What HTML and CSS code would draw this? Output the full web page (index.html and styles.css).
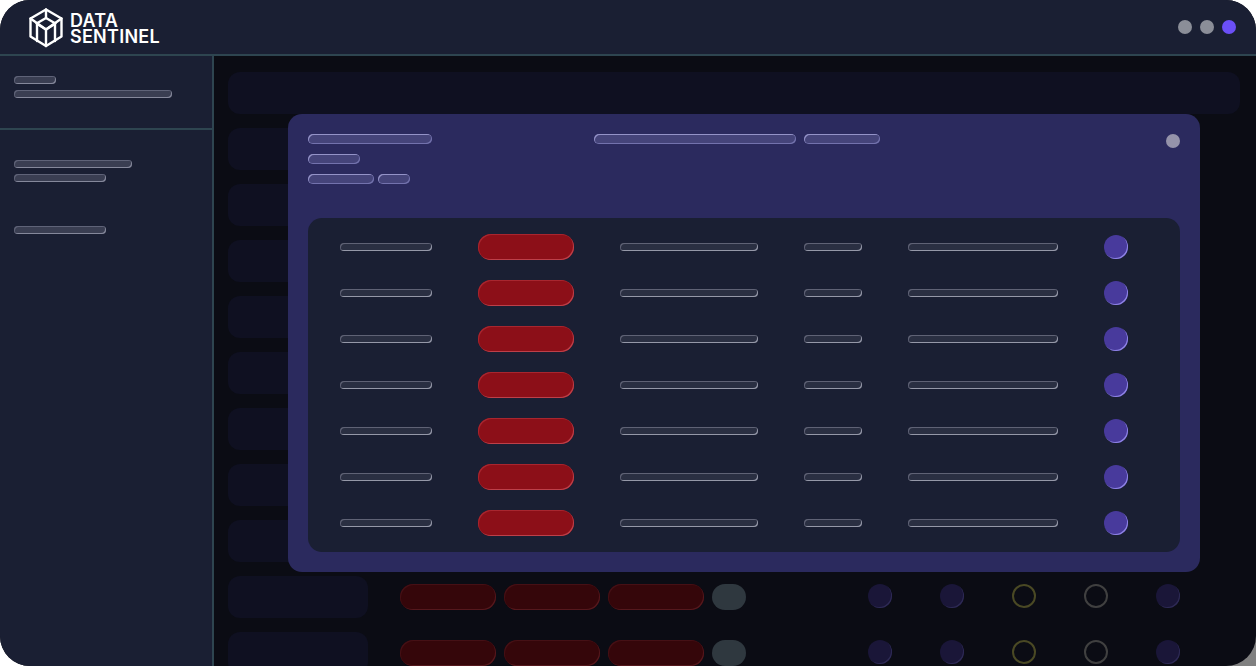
FILE: index.html
```html
<!DOCTYPE html>
<html lang="en">
<head>
    <meta charset="UTF-8">
    <meta name="viewport" content="width=device-width, initial-scale=1.0">
    <title>Data Sentinel</title>
    <link rel="stylesheet" href="styles.css">
</head>
<body>
    <div class="corner"></div>
    <div class="frame">
        <header class="topbar">
            <div class="logo">
                <svg class="logo-mark" width="34" height="40" viewBox="0 0 34 40" fill="none" stroke="#fff" stroke-width="2.4" stroke-linejoin="round" stroke-linecap="round">
                    <path d="M17 1.5 32.5 10.5V28.5L17 38 1.5 28.5V10.5Z"/>
                    <path d="M17 10 26.5 15.5 17 21.5 7.5 15.5Z"/>
                    <path d="M1.5 10.5 17 21.5 32.5 10.5"/>
                    <path d="M17 1.5V10"/>
                    <path d="M17 21.5V38M8 17V33M26 17V33"/>
                </svg>
                <div class="logo-text">
                    <div>DATA</div>
                    <div>SENTINEL</div>
                </div>
            </div>
            <div class="dots">
                <span class="dot"></span>
                <span class="dot"></span>
                <span class="dot dot-active"></span>
            </div>
        </header>
        <div class="content">
            <aside class="sidebar">
                <div class="side-top">
                    <span class="bar side-bar w42"></span>
                    <span class="bar side-bar w158"></span>
                </div>
                <div class="side-list">
                    <span class="bar side-bar w118"></span>
                    <span class="bar side-bar w92"></span>
                    <span class="bar side-bar w92 side-gap"></span>
                </div>
            </aside>
            <main class="main">
                <div class="searchbar"></div>
                <div class="bg-row"><div class="bg-label"></div><div class="bg-pill"></div><div class="bg-pill"></div><div class="bg-pill"></div><div class="bg-tag"></div><div class="bg-dots"><span class="bg-dot"></span><span class="bg-dot"></span><span class="bg-ring olive"></span><span class="bg-ring"></span><span class="bg-dot"></span></div></div>
                <div class="bg-row"><div class="bg-label"></div><div class="bg-pill"></div><div class="bg-pill"></div><div class="bg-pill"></div><div class="bg-tag"></div><div class="bg-dots"><span class="bg-dot"></span><span class="bg-dot"></span><span class="bg-ring olive"></span><span class="bg-ring"></span><span class="bg-dot"></span></div></div>
                <div class="bg-row"><div class="bg-label"></div><div class="bg-pill"></div><div class="bg-pill"></div><div class="bg-pill"></div><div class="bg-tag"></div><div class="bg-dots"><span class="bg-dot"></span><span class="bg-dot"></span><span class="bg-ring olive"></span><span class="bg-ring"></span><span class="bg-dot"></span></div></div>
                <div class="bg-row"><div class="bg-label"></div><div class="bg-pill"></div><div class="bg-pill"></div><div class="bg-pill"></div><div class="bg-tag"></div><div class="bg-dots"><span class="bg-dot"></span><span class="bg-dot"></span><span class="bg-ring olive"></span><span class="bg-ring"></span><span class="bg-dot"></span></div></div>
                <div class="bg-row"><div class="bg-label"></div><div class="bg-pill"></div><div class="bg-pill"></div><div class="bg-pill"></div><div class="bg-tag"></div><div class="bg-dots"><span class="bg-dot"></span><span class="bg-dot"></span><span class="bg-ring olive"></span><span class="bg-ring"></span><span class="bg-dot"></span></div></div>
                <div class="bg-row"><div class="bg-label"></div><div class="bg-pill"></div><div class="bg-pill"></div><div class="bg-pill"></div><div class="bg-tag"></div><div class="bg-dots"><span class="bg-dot"></span><span class="bg-dot"></span><span class="bg-ring olive"></span><span class="bg-ring"></span><span class="bg-dot"></span></div></div>
                <div class="bg-row"><div class="bg-label"></div><div class="bg-pill"></div><div class="bg-pill"></div><div class="bg-pill"></div><div class="bg-tag"></div><div class="bg-dots"><span class="bg-dot"></span><span class="bg-dot"></span><span class="bg-ring olive"></span><span class="bg-ring"></span><span class="bg-dot"></span></div></div>
                <div class="bg-row"><div class="bg-label"></div><div class="bg-pill"></div><div class="bg-pill"></div><div class="bg-pill"></div><div class="bg-tag"></div><div class="bg-dots"><span class="bg-dot"></span><span class="bg-dot"></span><span class="bg-ring olive"></span><span class="bg-ring"></span><span class="bg-dot"></span></div></div>
                <div class="bg-row"><div class="bg-label"></div><div class="bg-pill"></div><div class="bg-pill"></div><div class="bg-pill"></div><div class="bg-tag"></div><div class="bg-dots"><span class="bg-dot"></span><span class="bg-dot"></span><span class="bg-ring olive"></span><span class="bg-ring"></span><span class="bg-dot"></span></div></div>
                <div class="bg-row"><div class="bg-label"></div><div class="bg-pill"></div><div class="bg-pill"></div><div class="bg-pill"></div><div class="bg-tag"></div><div class="bg-dots"><span class="bg-dot"></span><span class="bg-dot"></span><span class="bg-ring olive"></span><span class="bg-ring"></span><span class="bg-dot"></span></div></div>
            </main>
        </div>

        <div class="modal">
            <div class="modal-head">
                <div class="head-col">
                    <span class="bar head-bar w124"></span>
                    <span class="bar head-bar w52"></span>
                    <div class="head-pair">
                        <span class="bar head-bar w66"></span>
                        <span class="bar head-bar w32"></span>
                    </div>
                </div>
                <div class="head-pair head-mid">
                    <span class="bar head-bar w202"></span>
                    <span class="bar head-bar w76"></span>
                </div>
                <span class="modal-close"></span>
            </div>
            <div class="modal-table">
                <span class="bar cell w92"></span><span class="status"></span><span class="bar cell w138"></span><span class="bar cell w58"></span><span class="bar cell w150"></span><span class="action"></span>
                <span class="bar cell w92"></span><span class="status"></span><span class="bar cell w138"></span><span class="bar cell w58"></span><span class="bar cell w150"></span><span class="action"></span>
                <span class="bar cell w92"></span><span class="status"></span><span class="bar cell w138"></span><span class="bar cell w58"></span><span class="bar cell w150"></span><span class="action"></span>
                <span class="bar cell w92"></span><span class="status"></span><span class="bar cell w138"></span><span class="bar cell w58"></span><span class="bar cell w150"></span><span class="action"></span>
                <span class="bar cell w92"></span><span class="status"></span><span class="bar cell w138"></span><span class="bar cell w58"></span><span class="bar cell w150"></span><span class="action"></span>
                <span class="bar cell w92"></span><span class="status"></span><span class="bar cell w138"></span><span class="bar cell w58"></span><span class="bar cell w150"></span><span class="action"></span>
                <span class="bar cell w92"></span><span class="status"></span><span class="bar cell w138"></span><span class="bar cell w58"></span><span class="bar cell w150"></span><span class="action"></span>
            </div>
        </div>
    </div>
</body>
</html>
```

FILE: styles.css
```css
html, body {
    margin: 0;
    padding: 0;
    background: #fff;
}
body {
    position: relative;
    width: 1256px;
    height: 666px;
    overflow: hidden;
}
.corner {
    position: absolute;
    right: 0;
    bottom: 0;
    width: 30px;
    height: 30px;
    background: #808080;
}
.frame {
    position: relative;
    width: 1256px;
    height: 666px;
    border-radius: 30px;
    overflow: hidden;
    background: #0b0c14;
    display: flex;
    flex-direction: column;
}

/* top bar */
.topbar {
    height: 54px;
    flex: none;
    display: flex;
    align-items: center;
    justify-content: space-between;
    padding: 0 20px 0 29px;
    background: #1a1f33;
    border-bottom: 2px solid #2e4550;
}
.logo {
    display: flex;
    align-items: center;
    gap: 7px;
}
.logo-mark {
    display: block;
    margin-top: 1px;
}
.logo-text {
    font-family: Inter, "Liberation Sans", sans-serif;
    font-weight: 600;
    font-size: 18px;
    line-height: 16px;
    letter-spacing: 0.25px;
    color: #fff;
    margin-top: 4px;
}
.dots {
    display: flex;
    gap: 8px;
}
.dot {
    width: 14px;
    height: 14px;
    border-radius: 50%;
    background: #8b8e98;
}
.dot-active {
    background: #6b4ff6;
}

/* placeholder bars */
.bar {
    display: block;
    border-radius: 4px;
    flex: none;
}
.side-bar {
    height: 8px;
    background: #3a3e52;
    box-shadow: inset 1px 1px 0 #5f6378, inset -1px -1px 0 #85889b;
}
.head-bar {
    height: 10px;
    border-radius: 5px;
    background: #45447a;
    box-shadow: inset 1px 1px 0 #9493c8, inset -1px -1px 0 #7372ad;
}
.cell {
    height: 8px;
    background: #2a2f42;
    box-shadow: inset 1px 1px 0 #5f6275, inset -1px -1px 0 #9598a8;
}
.w32 { width: 32px; }
.w42 { width: 42px; }
.w52 { width: 52px; }
.w58 { width: 58px; }
.w66 { width: 66px; }
.w76 { width: 76px; }
.w92 { width: 92px; }
.w118 { width: 118px; }
.w124 { width: 124px; }
.w138 { width: 138px; }
.w150 { width: 150px; }
.w158 { width: 158px; }
.w202 { width: 202px; }

/* sidebar */
.content {
    flex: 1;
    display: flex;
    min-height: 0;
}
.sidebar {
    width: 212px;
    flex: none;
    background: #1a1f33;
    border-right: 2px solid #2e4550;
}
.side-top {
    height: 74px;
    box-sizing: border-box;
    padding: 20px 14px 0;
    display: flex;
    flex-direction: column;
    gap: 6px;
    border-bottom: 2px solid #2e4550;
}
.side-list {
    padding: 30px 14px 0;
    display: flex;
    flex-direction: column;
    gap: 6px;
}
.side-gap {
    margin-top: 38px;
}

/* dimmed page behind the modal */
.main {
    flex: 1;
    min-width: 0;
    padding: 16px 16px 0 14px;
    display: flex;
    flex-direction: column;
    gap: 14px;
}
.searchbar {
    height: 42px;
    flex: none;
    border-radius: 12px;
    background: #0f1021;
}
.bg-row {
    height: 42px;
    flex: none;
    display: flex;
    align-items: flex-start;
}
.bg-label {
    width: 140px;
    height: 42px;
    flex: none;
    border-radius: 12px;
    background: #0f1021;
    margin-right: 32px;
}
.bg-pill {
    width: 96px;
    height: 26px;
    box-sizing: border-box;
    margin: 8px 8px 0 0;
    border-radius: 13px;
    background: #35060a;
    box-shadow: inset 1px 1px 0 #451015, inset -1px -1px 0 #55181d;
}
.bg-tag {
    width: 34px;
    height: 26px;
    margin-top: 8px;
    border-radius: 13px;
    background: #2f383f;
}
.bg-dots {
    display: flex;
    gap: 48px;
    margin: 8px 0 0 122px;
}
.bg-dot {
    width: 24px;
    height: 24px;
    border-radius: 50%;
    background: #1a1638;
    box-shadow: inset -1px -1px 0 #2e2a55;
}
.bg-ring {
    width: 24px;
    height: 24px;
    box-sizing: border-box;
    border-radius: 50%;
    border: 2px solid #404040;
}
.olive {
    border-color: #4a4924;
}

/* modal */
.modal {
    position: absolute;
    left: 288px;
    top: 114px;
    width: 912px;
    height: 458px;
    box-sizing: border-box;
    padding: 20px;
    border-radius: 14px;
    background: #2b2a5e;
}
.modal-head {
    position: relative;
    height: 84px;
    display: flex;
    gap: 162px;
}
.head-col {
    width: 124px;
    flex: none;
    display: flex;
    flex-direction: column;
    gap: 10px;
}
.head-pair {
    display: flex;
    gap: 4px;
}
.head-mid {
    gap: 8px;
    align-self: flex-start;
}
.modal-close {
    position: absolute;
    right: 0;
    top: 0;
    width: 14px;
    height: 14px;
    border-radius: 50%;
    background: #9593aa;
}
.modal-table {
    height: 334px;
    box-sizing: border-box;
    padding: 16px 32px;
    border-radius: 14px;
    background: #1a1f33;
    display: grid;
    grid-template-columns: 92px 96px 138px 58px 150px 24px;
    grid-auto-rows: 26px;
    column-gap: 46px;
    row-gap: 20px;
    align-items: center;
}
.status {
    display: block;
    height: 26px;
    border-radius: 13px;
    background: #8c0f18;
    box-shadow: inset 1px 1px 0 #a8262f, inset -1px -1px 0 #bd4049;
}
.action {
    display: block;
    width: 24px;
    height: 24px;
    border-radius: 50%;
    background: #483a9c;
    box-shadow: inset -1px -1px 0 #8f84e6;
}
```
